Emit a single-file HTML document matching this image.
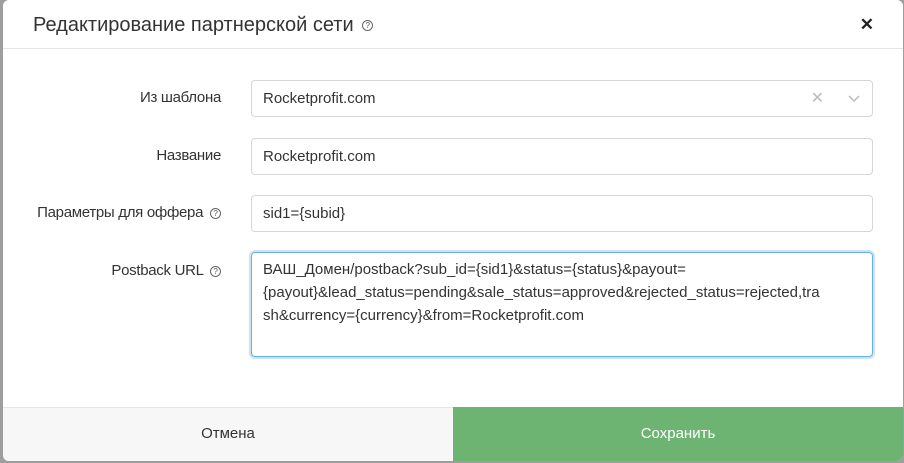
<!DOCTYPE html>
<html><head><meta charset="utf-8"><style>
*{box-sizing:border-box;margin:0;padding:0}
body{width:904px;height:463px;background:#9e9e9e;font-family:"Liberation Sans",sans-serif;position:relative;overflow:hidden;color:#333}
.m{position:absolute;left:3px;top:0;width:900px;height:461px;background:#fff;border-radius:6px;overflow:hidden}
.hd{height:49px;border-bottom:1px solid #e5e5e5;position:relative}
.hd h1{position:absolute;left:30px;top:14px;font-size:20px;font-weight:normal;color:#333}
.q{display:inline-block;width:11px;height:11px;border:1px solid #666;border-radius:50%;font-size:8px;line-height:9px;text-align:center;vertical-align:middle;color:#555;margin-left:3px}
.x{position:absolute;right:29px;top:15px;font-size:17px;font-weight:bold;color:#222}
.lb{position:absolute;right:682px;font-size:15px;color:#333;text-align:right;white-space:nowrap;letter-spacing:-0.3px}
.in{position:absolute;left:248px;width:622px;height:37px;border:1px solid #d6d6d6;border-radius:4px;font-size:15px;padding:9px 11px;color:#333}
.ta{position:absolute;left:248px;top:252px;width:622px;height:105px;border:1px solid #66afe9;box-shadow:0 0 0 2px #cfe2f6;border-radius:4px;font-size:15px;line-height:23px;padding:5px 11px;color:#333}
.ft{position:absolute;left:0;top:407px;width:900px;height:54px;border-top:1px solid #e5e5e5;background:#f7f7f7}
.c{position:absolute;left:0;width:450px;top:0;height:54px;line-height:52px;text-align:center;font-size:15px;color:#333}
.s{position:absolute;left:450px;width:450px;top:-1px;height:55px;line-height:53px;text-align:center;font-size:15px;color:#fff;background:#6db371}
</style></head><body>
<div class="m">
<div class="hd"><h1>Редактирование партнерской сети <span class="q">?</span></h1><div class="x">✕</div></div>
<div class="lb" style="top:89px">Из шаблона</div>
<div class="in" style="top:80px">Rocketprofit.com<span style="position:absolute;right:48px;top:7px;color:#bbb;font-size:16px">✕</span><svg style="position:absolute;right:12px;top:14px" width="12" height="8"><path d="M1 1l5 5 5-5" stroke="#bbb" stroke-width="1.5" fill="none"/></svg></div>
<div class="lb" style="top:147px">Название</div>
<div class="in" style="top:138px">Rocketprofit.com</div>
<div class="lb" style="top:204px">Параметры для оффера <span class="q">?</span></div>
<div class="in" style="top:195px">sid1={subid}</div>
<div class="lb" style="top:262px">Postback URL <span class="q">?</span></div>
<div class="ta">ВАШ_Домен/postback?sub_id={sid1}&amp;status={status}&amp;payout=<br>{payout}&amp;lead_status=pending&amp;sale_status=approved&amp;rejected_status=rejected,tra<br>sh&amp;currency={currency}&amp;from=Rocketprofit.com</div>
<div class="ft"><div class="c">Отмена</div><div class="s">Сохранить</div></div>
</div>
</body></html>
